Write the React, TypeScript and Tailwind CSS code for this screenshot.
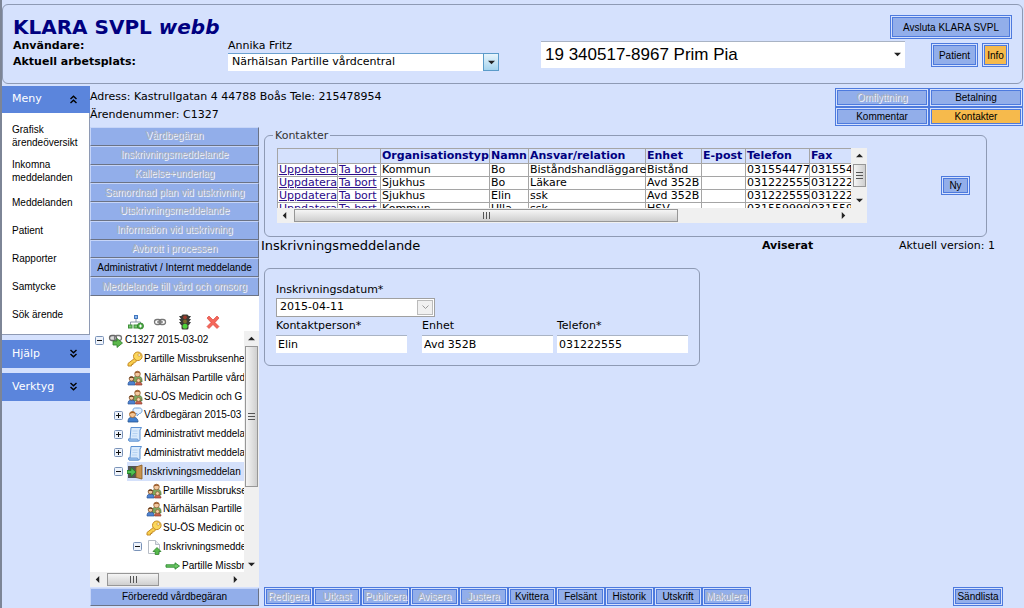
import { useState } from 'react';
import { clsx } from 'clsx';

type IconName = 'case' | 'key' | 'people' | 'request' | 'note' | 'door' | 'page' | 'arrow';

interface TreeItem {
  level: 0 | 1 | 2 | 3;
  icon: IconName;
  label: string;
  toggle?: 'open' | 'closed';
  selected?: boolean;
}

const navItems = [
  'Grafisk ärendeöversikt',
  'Inkomna meddelanden',
  'Meddelanden',
  'Patient',
  'Rapporter',
  'Samtycke',
  'Sök ärende',
];

const caseActions = [
  { label: 'Vårdbegäran', enabled: false },
  { label: 'Inskrivningsmeddelande', enabled: false },
  { label: 'Kallelse+underlag', enabled: false },
  { label: 'Samordnad plan vid utskrivning', enabled: false },
  { label: 'Utskrivningsmeddelande', enabled: false },
  { label: 'Information vid utskrivning', enabled: false },
  { label: 'Avbrott i processen', enabled: false },
  { label: 'Administrativt / Internt meddelande', enabled: true },
  { label: 'Meddelande till vård och omsorg', enabled: false },
];

const treeItems: TreeItem[] = [
  { level: 0, icon: 'case', label: 'C1327 2015-03-02', toggle: 'open' },
  { level: 1, icon: 'key', label: 'Partille Missbruksenhe' },
  { level: 1, icon: 'people', label: 'Närhälsan Partille vård' },
  { level: 1, icon: 'people', label: 'SU-ÖS Medicin och G' },
  { level: 1, icon: 'request', label: 'Vårdbegäran 2015-03', toggle: 'closed' },
  { level: 1, icon: 'note', label: 'Administrativt meddela', toggle: 'closed' },
  { level: 1, icon: 'note', label: 'Administrativt meddela', toggle: 'closed' },
  { level: 1, icon: 'door', label: 'Inskrivningsmeddelan', toggle: 'open', selected: true },
  { level: 2, icon: 'people', label: 'Partille Missbrukse' },
  { level: 2, icon: 'people', label: 'Närhälsan Partille' },
  { level: 2, icon: 'key', label: 'SU-ÖS Medicin oc' },
  { level: 2, icon: 'page', label: 'Inskrivningsmedde', toggle: 'open' },
  { level: 3, icon: 'arrow', label: 'Partille Missbr' },
];

const indent = ['pl-[5px]', 'pl-[24px]', 'pl-[43px]', 'pl-[62px]'];

const columns = [
  { label: '', width: 'w-[60px]' },
  { label: '', width: 'w-[43px]' },
  { label: 'Organisationstyp', width: 'w-[109px]' },
  { label: 'Namn', width: 'w-[39px]' },
  { label: 'Ansvar/relation', width: 'w-[117px]' },
  { label: 'Enhet', width: 'w-[56px]' },
  { label: 'E-post', width: 'w-[44px]' },
  { label: 'Telefon', width: 'w-[64px]' },
  { label: 'Fax', width: 'w-[70px]' },
];

const contacts = [
  ['Kommun', 'Bo', 'Biståndshandläggare', 'Bistånd', '', '031554477', '031554'],
  ['Sjukhus', 'Bo', 'Läkare', 'Avd 352B', '', '031222555', '031222'],
  ['Sjukhus', 'Elin', 'ssk', 'Avd 352B', '', '031222555', '031222'],
  ['Kommun', 'Ulla', 'ssk', 'HSV', '', '031559999', '031559'],
];

const footerActions = [
  { label: 'Redigera', enabled: false },
  { label: 'Utkast', enabled: false },
  { label: 'Publicera', enabled: false },
  { label: 'Avisera', enabled: false },
  { label: 'Justera', enabled: false },
  { label: 'Kvittera', enabled: true },
  { label: 'Felsänt', enabled: true },
  { label: 'Historik', enabled: true },
  { label: 'Utskrift', enabled: true },
  { label: 'Makulera', enabled: false },
];

const arial = "font-['Liberation_Sans',Arial,sans-serif]";
const embossed = 'text-[#aab1bf] [text-shadow:1px_1px_0_#f4f6fb]';

interface ButtonProps {
  label: string;
  disabled?: boolean;
  active?: boolean;
  className?: string;
}

function FrameButton({ label, disabled, active, className }: ButtonProps) {
  return (
    <button
      type="button"
      disabled={disabled}
      className={clsx(
        'flex items-center justify-center border-3 border-double border-[#4d7ade] bg-clip-padding whitespace-nowrap',
        arial,
        active ? 'bg-[#f6ba4c]' : 'bg-[#92aeea]',
        disabled ? embossed : 'text-black',
        className,
      )}
    >
      {label}
    </button>
  );
}

function BarButton({ label, disabled, className }: ButtonProps) {
  return (
    <button
      type="button"
      disabled={disabled}
      className={clsx(
        'flex w-full items-center justify-center border border-t-[#c6d5f8] border-r-[#6b7385] border-b-[#6b7385] border-l-[#c6d5f8] bg-[#92aeea] text-[10px] leading-none whitespace-nowrap',
        arial,
        disabled ? embossed : 'text-black',
        className,
      )}
    >
      {label}
    </button>
  );
}

function Chevrons({ up }: { up?: boolean }) {
  return (
    <svg width="9" height="10" viewBox="0 0 9 10" fill="none" stroke="#000" strokeWidth="1.4">
      {up ? (
        <path d="M1.500 4 4.500 1.200 7.500 4M1.500 8 4.500 5.200 7.500 8" />
      ) : (
        <path d="M1.500 1 4.500 3.800 7.500 1M1.500 5 4.500 7.800 7.500 5" />
      )}
    </svg>
  );
}

function Triangle({ dir, className }: { dir: 'up' | 'down' | 'left' | 'right'; className?: string }) {
  const points = {
    up: '0,6 4,2 8,6',
    down: '0,2 8,2 4,6',
    left: '6,0 2,4 6,8',
    right: '2,0 6,4 2,8',
  };
  return (
    <svg width="7" height="7" viewBox="0 0 8 8" className={className}>
      <polygon points={points[dir]} fill="#222" />
    </svg>
  );
}

// Three small ridges on a scroll thumb
function Grip({ vertical }: { vertical?: boolean }) {
  return (
    <svg width="7" height="7" viewBox="0 0 7 7" stroke="#555">
      {vertical ? <path d="M0 .5h7M0 3.5h7M0 6.5h7" /> : <path d="M.5 0v7M3.5 0v7M6.5 0v7" />}
    </svg>
  );
}

function TreeIcon({ name }: { name: IconName }) {
  return (
    <svg width="16" height="16" viewBox="0 0 16 16" fill="none" className="shrink-0">
      {name === 'case' && (
        <>
          <rect x="1.500" y="3.500" width="7" height="5" rx="2.5" fill="#ddd" stroke="#666" strokeWidth="1.3" />
          <rect x="6.500" y="3.500" width="7" height="5" rx="2.5" stroke="#777" strokeWidth="1.3" />
          <path d="M5 9h4V6.500l5.500 4.500-5.500 4.500V13H5z" fill="#5cb84c" stroke="#2f7d2b" strokeWidth=".8" />
        </>
      )}
      {name === 'key' && (
        <>
          <path d="M8 7 1 12.500V15h3.500v-1.500H6V12h1.500l2.500-2.500z" fill="#f9cf4e" stroke="#c48a25" />
          <circle cx="10.800" cy="5.300" r="4.300" fill="#fbd75c" stroke="#c48a25" />
          <circle cx="12.200" cy="4" r="1.300" fill="#fff" stroke="#c48a25" strokeWidth=".7" />
        </>
      )}
      {name === 'people' && (
        <>
          <path d="M6 10c0-3 2-4 4.500-4S15 7.500 15 10v2H6z" fill="#7fa85f" stroke="#4b6d38" strokeWidth=".7" />
          <circle cx="10.500" cy="4" r="2.800" fill="#f3c9a0" stroke="#9a6a3a" strokeWidth=".8" />
          <path d="M7.700 3.500C8 .5 13 .5 13.300 3.500 12 2.500 9.500 2.500 7.700 3.500z" fill="#9a5a2c" />
          <path d="M1 15c0-3 1-4 3.500-4S8 12 8 15z" fill="#4d82cf" stroke="#2a5599" strokeWidth=".7" />
          <circle cx="4.500" cy="8.800" r="2.300" fill="#f3c9a0" stroke="#7c4a22" strokeWidth=".8" />
          <path d="M2.200 8.500C2.400 5.800 6.600 5.800 6.800 8.500 5.500 7.500 3.500 7.500 2.200 8.500z" fill="#5d3516" />
          <path d="M8.500 15c0-2 1-3 3-3s3.500 1 3.500 3z" fill="#c8604c" stroke="#8c3a2b" strokeWidth=".7" />
          <circle cx="11.500" cy="10.500" r="1.900" fill="#f5d0a9" stroke="#8b5426" strokeWidth=".7" />
        </>
      )}
      {name === 'request' && (
        <>
          <path d="M8.500 1h4c1.500 0 2.500 1 2.500 2.500S14 6.500 12.500 6.500L10 9V6.500H8.500C7 6.500 6 5.500 6 3.500S7 1 8.500 1z" fill="#e4f1ff" stroke="#6b9fd8" />
          <path d="M1 15c0-4 2-5 4.500-5S11 11 11 15z" fill="#3f7fd0" stroke="#23538f" strokeWidth=".8" />
          <circle cx="5.500" cy="7.500" r="3" fill="#f5c795" stroke="#a3642c" strokeWidth=".8" />
          <path d="M2.500 7C3 3.500 8 3.500 8.500 7 7 5.700 4.500 5.700 2.500 7z" fill="#a65e20" />
        </>
      )}
      {name === 'note' && (
        <>
          <path d="M4 1.500h10.500L13 4v9.500c0 1-.5 1.500-1.500 1.500H2l-.5-2H3z" fill="#d9eafc" stroke="#5a8fd0" />
          <path d="M5.500 5h5M5.500 7.500h5M5 10h5" stroke="#b5d2f2" />
          <path d="M1.500 13h9l1 2H2z" fill="#a8ccf3" stroke="#5a8fd0" strokeWidth=".8" />
        </>
      )}
      {name === 'door' && (
        <>
          <rect x="1" y="2" width="10" height="12" fill="#555" />
          <path d="m9 3 6-2v14l-6-1.500z" fill="#c9934d" stroke="#8a5b22" strokeWidth=".8" />
          <path d="M0 6.500h4V3.500L9 8l-5 4.500v-3H0z" fill="#4fc054" stroke="#1c7a22" strokeWidth=".8" />
        </>
      )}
      {name === 'page' && (
        <>
          <path d="M2.500 1.500h7l4 4v9h-11z" fill="#fff" stroke="#b7bdc6" />
          <path d="M9.500 1.500v4h4" fill="#e6e9ee" stroke="#b7bdc6" />
          <path d="m11 8.500 4 4h-2.200v3H9.200v-3H7z" fill="#56b94b" stroke="#2d8128" strokeWidth=".8" />
        </>
      )}
      {name === 'arrow' && (
        <path d="M1 6.800h9V4.800L14.500 8 10 11.200v-2H1z" fill="#6cc665" stroke="#2b8a2f" strokeWidth=".9" />
      )}
    </svg>
  );
}

function TreeToolbar() {
  return (
    <div className="flex h-[35px] items-end gap-2 pb-px pl-[38px]">
      <button type="button" aria-label="Nytt ärende">
        <svg width="16" height="16" viewBox="0 0 16 16" fill="none">
          <path d="M8 5v3M2.500 11V8h10v2" stroke="#8a96a5" />
          <rect x="6.500" y="1.500" width="3" height="3" fill="#8fb9ef" stroke="#4377bd" />
          <rect x=".5" y="11" width="3.500" height="3" fill="#77c96f" stroke="#3f8f3b" />
          <rect x="6" y="11" width="3.500" height="3" fill="#77c96f" stroke="#3f8f3b" />
          <circle cx="12.500" cy="12" r="3" fill="#4fae48" stroke="#2c7a28" strokeWidth=".8" />
          <path d="M11 12h3M12.500 10.500v3" stroke="#fff" />
        </svg>
      </button>
      <button type="button" aria-label="Länka">
        <svg width="16" height="16" viewBox="0 0 16 16" fill="none" stroke="#777" strokeWidth="1.300">
          <rect x="2.500" y="5.500" width="6.500" height="5" rx="2.500" />
          <rect x="7" y="5.500" width="6.500" height="5" rx="2.500" />
          <path d="M5 8h6" />
        </svg>
      </button>
      <button type="button" aria-label="Status" className="ml-px">
        <svg width="16" height="16" viewBox="0 0 16 16">
          <path d="M2 2h12l-2 3h2l-2 3h2l-2 3H4L2 8h2L2 5h2z" fill="#3a3a3a" />
          <rect x="4.500" y=".5" width="7" height="15" rx="1.500" fill="#3c3c34" />
          <circle cx="8" cy="3.300" r="1.900" fill="#9c3a2c" />
          <circle cx="8" cy="7.500" r="1.900" fill="#7a6a2a" />
          <circle cx="8" cy="12.300" r="2.500" fill="#4fd23b" />
        </svg>
      </button>
      <button type="button" aria-label="Ta bort" className="ml-1">
        <svg width="16" height="16" viewBox="0 0 16 16">
          <path
            d="m2 4 2-2 4 4 4-4 2 2-4 4.500 4 4-2 2-4-4-4 4-2-2 4-4z"
            fill="#f4675b"
            stroke="#d63a30"
            strokeWidth=".6"
          />
        </svg>
      </button>
    </div>
  );
}

function CaseTree() {
  return (
    <div className="flex flex-1 flex-col bg-white">
      <TreeToolbar />
      <div className="flex flex-1">
        <div className="flex w-0 flex-1 flex-col overflow-hidden">
          {/* the last row runs in under the scroll bar */}
          <ul className="-mb-[3px] flex flex-1 flex-col">
            {treeItems.map((item, i) => (
              <li
                key={i}
                className={clsx(
                  'flex min-h-[18px] flex-1 items-center text-[10px] leading-none whitespace-nowrap',
                  arial,
                  indent[item.level],
                )}
              >
                {item.toggle ? (
                  <button type="button" aria-label={item.toggle === 'open' ? 'Fäll ihop' : 'Fäll ut'}>
                    <svg width="9" height="9" viewBox="0 0 9 9" fill="#eef3fb" stroke="#7a93b8">
                      <rect x=".5" y=".5" width="8" height="8" rx="1" />
                      <path d={item.toggle === 'open' ? 'M2 4.5h5' : 'M2 4.5h5M4.500 2v5'} stroke="#111" />
                    </svg>
                  </button>
                ) : (
                  <span className="w-[9px] shrink-0" />
                )}
                <span
                  className={clsx('ml-1 flex h-full items-center gap-px', item.selected && 'flex-1 bg-[#d5e1fb]')}
                >
                  <TreeIcon name={item.icon} />
                  {item.label}
                </span>
              </li>
            ))}
          </ul>
        </div>
        <div className="flex w-[15px] flex-col items-center bg-[#f0f0f0]">
          <Triangle dir="up" className="my-1" />
          <div className="flex h-[141px] w-[13px] items-center justify-center border border-[#979797] bg-linear-to-r from-[#f5f5f5] to-[#cfcfcf]">
            <Grip vertical />
          </div>
          <Triangle dir="down" className="mt-auto mb-1" />
        </div>
      </div>
      <div className="flex h-[15px] items-center bg-[#f0f0f0] pr-5 pl-1">
        <Triangle dir="left" />
        <div className="ml-1.5 flex h-[13px] w-[52px] items-center justify-center border border-[#979797] bg-linear-to-b from-[#f5f5f5] to-[#cfcfcf]">
          <Grip />
        </div>
        <Triangle dir="right" className="ml-auto" />
      </div>
    </div>
  );
}

function ContactTable() {
  return (
    <div className="flex w-[590px] shrink-0 flex-col bg-[#f0f0f0]">
      <div className="flex h-[60px]">
        <div className="w-0 flex-1 overflow-hidden bg-white">
          <table className="w-[602px] table-fixed border-collapse text-[11px] leading-[12px]">
            <thead>
              <tr className="h-[15px] bg-[#d5e1fd] text-left text-[#000080]">
                {columns.map((col, i) => (
                  <th key={i} className={clsx('border border-[#a5a5a5] px-px py-0 whitespace-nowrap', col.width)}>
                    {col.label}
                  </th>
                ))}
              </tr>
            </thead>
            <tbody>
              {contacts.map((row, i) => (
                <tr key={i} className="h-[13px]">
                  <td className="border border-[#a5a5a5] px-px py-0">
                    <a href="#uppdatera" className="text-[#2a0a8a] underline">Uppdatera</a>
                  </td>
                  <td className="border border-[#a5a5a5] px-px py-0 whitespace-nowrap">
                    <a href="#tabort" className="text-[#2a0a8a] underline">Ta bort</a>
                  </td>
                  {row.map((cell, j) => (
                    <td key={j} className="border border-[#a5a5a5] px-px py-0 whitespace-nowrap">{cell}</td>
                  ))}
                </tr>
              ))}
            </tbody>
          </table>
        </div>
        <div className="flex w-[16px] flex-col items-center">
          <Triangle dir="up" className="mt-1 mb-[5px]" />
          <div className="flex h-[23px] w-[13px] items-center justify-center border border-[#979797] bg-linear-to-r from-[#f5f5f5] to-[#cfcfcf]">
            <Grip vertical />
          </div>
          <Triangle dir="down" className="mt-auto mb-1" />
        </div>
      </div>
      <div className="flex h-[15px] items-center pr-5 pl-1">
        <Triangle dir="left" />
        <div className="ml-1.5 flex h-[13px] w-[384px] items-center justify-center border border-[#979797] bg-linear-to-b from-[#f5f5f5] to-[#cfcfcf]">
          <Grip />
        </div>
        <Triangle dir="right" className="ml-auto" />
      </div>
    </div>
  );
}

interface FieldProps { id: string; label: string; value: string; onChange: (v: string) => void; }

function Field({ id, label, value, onChange }: FieldProps) {
  return (
    <div className="flex flex-col">
      <label htmlFor={id} className="leading-[18px]">{label}</label>
      <input
        id={id}
        value={value}
        onChange={(e) => onChange(e.target.value)}
        className="h-[18px] w-[131px] border-t border-[#a9b3c4] bg-white px-0.5"
      />
    </div>
  );
}

function Header() {
  return (
    <header className="mt-1 flex h-20 items-start rounded-md border border-[#8e9ab4] pr-[10px] pl-[10px]">
      <div className="w-[528px] shrink-0 pt-2.5">
        <h1 className="text-[20px] leading-6 font-bold text-[#000080]">
          KLARA SVPL <em>webb</em>
        </h1>
        <div className="grid grid-cols-[215px_271px] items-center">
          <span className="leading-[14px] font-bold">Användare:</span>
          <span className="leading-[14px]">Annika Fritz</span>
          <label htmlFor="workplace" className="font-bold">Aktuell arbetsplats:</label>
          <div className="relative">
            <select
              id="workplace"
              className="block h-[18px] w-full appearance-none border-t border-[#6ba0d0] bg-white px-1"
            >
              <option>Närhälsan Partille vårdcentral</option>
            </select>
            <span className="pointer-events-none absolute inset-y-0 right-0 flex w-4 items-center justify-center border border-[#5b9bc9] bg-linear-to-b from-[#e8f5fc] to-[#a5d4ee]">
              <Triangle dir="down" />
            </span>
          </div>
        </div>
      </div>
      <div className="relative mt-9 flex-1">
        <select
          aria-label="Patient"
          className={clsx(
            'block h-[27px] w-full appearance-none border-t border-[#a9b3c4] bg-white px-1 text-[17px]',
            arial,
          )}
        >
          <option>19 340517-8967 Prim Pia</option>
        </select>
        <Triangle dir="down" className="pointer-events-none absolute top-2.5 right-1" />
      </div>
      <div className="ml-[-15px] flex w-[122px] shrink-0 flex-col pt-2.5 text-[10px]">
        <FrameButton label="Avsluta KLARA SVPL" className="h-6" />
        <div className="mt-1 mr-[3px] flex justify-end gap-1">
          <FrameButton label="Patient" className="h-6 w-[47px]" />
          <FrameButton label="Info" active className="h-6 w-[27px]" />
        </div>
      </div>
    </header>
  );
}

function SideNav() {
  return (
    <nav className="flex w-[88px] shrink-0 flex-col gap-[5px]">
      <div>
        <button type="button" className="flex h-[27px] w-full items-center justify-between bg-[#5b85dc] pr-3 pl-2.5 text-white">
          Meny <Chevrons up />
        </button>
        <ul className={clsx('border-r border-b border-[#8e9ab4] bg-white pt-[5px] pb-1.5 text-[10px] leading-[13px]', arial)}>
          {navItems.map((item) => (
            <li
              key={item}
              className={clsx('flex items-center pl-2.5', item.includes(' ') && item !== 'Sök ärende' ? 'h-[35px]' : 'h-7')}
            >
              <a href="#meny" className={clsx('block', item !== 'Sök ärende' && 'w-[60px]')}>{item}</a>
            </li>
          ))}
        </ul>
      </div>
      {['Hjälp', 'Verktyg'].map((label) => (
        <button
          key={label}
          type="button"
          className="flex h-[28px] w-full items-center justify-between bg-[#5b85dc] pr-3 pl-2.5 text-white"
        >
          {label} <Chevrons />
        </button>
      ))}
    </nav>
  );
}

export default function App() {
  const [form, setForm] = useState({ person: 'Elin', unit: 'Avd 352B', phone: '031222555' });

  return (
    <div className="flex min-h-screen flex-col border-l-2 border-[#7d8596] bg-[#d5e1fd] pr-px font-['DejaVu_Sans',Verdana,sans-serif] text-[11px] text-black">
      <Header />
      <div className="mt-0.5 flex flex-1">
        <SideNav />
        <main className="flex min-w-0 flex-1 flex-col">
          <div className="flex h-[41px] items-start justify-between pt-0.5">
            <div className="leading-[18px]">
              <p>Adress: Kastrullgatan 4 44788 Boås Tele: 215478954</p>
              <p>Ärendenummer: C1327</p>
            </div>
            <div className="grid grid-cols-[94px_94px] text-[10px]">
              <FrameButton label="Omflyttning" disabled className="h-[19px]" />
              <FrameButton label="Betalning" className="h-[19px]" />
              <FrameButton label="Kommentar" className="h-[19px]" />
              <FrameButton label="Kontakter" active className="h-[19px]" />
            </div>
          </div>

          <div className="flex flex-1">
            <div className="flex w-[169px] shrink-0 flex-col pb-0.5">
              <div className="grid h-[169px] grid-rows-9">
                {caseActions.map((a) => (
                  <BarButton key={a.label} label={a.label} disabled={!a.enabled} />
                ))}
              </div>
              <CaseTree />
              <BarButton label="Förberedd vårdbegäran" className="mt-px h-[18px]" />
            </div>

            <div className="flex min-w-0 flex-1 flex-col pl-[5px]">
              <fieldset className="mr-9 rounded-md border border-[#8e9ab4] pt-1 pr-4 pb-[13px] pl-3">
                <legend className="-ml-1 px-0.5 leading-[17px] text-[#333]">Kontakter</legend>
                <div className="flex items-center justify-between">
                  <ContactTable />
                  <FrameButton label="Ny" className="h-[19px] w-[29px] text-[10px]" />
                </div>
              </fieldset>

              <div className="grid grid-cols-[498px_1fr_auto] items-center pr-7 leading-[17px]">
                <h2 className="-ml-[3px] text-[13px]">Inskrivningsmeddelande</h2>
                <strong>Aviserat</strong>
                <span>Aktuell version: 1</span>
              </div>

              <form className="mt-3.5 w-[436px] rounded-md border border-[#8e9ab4] px-[11px] pt-3 pb-3">
                <label htmlFor="admitted" className="block leading-[17px]">Inskrivningsdatum*</label>
                <div className="relative w-[159px]">
                  <select
                    id="admitted"
                    className="block h-[19px] w-full appearance-none border border-[#a0a0a0] bg-white px-[3px]"
                  >
                    <option>2015-04-11</option>
                  </select>
                  <span className="pointer-events-none absolute inset-y-0.5 right-0.5 flex w-4 items-center justify-center border border-[#bbb] bg-[#f0f0f0]">
                    <svg width="7" height="5" viewBox="0 0 7 5" fill="none" stroke="#999">
                      <path d="m.5.500 3 3 3-3" />
                    </svg>
                  </span>
                </div>
                <div className="grid grid-cols-[146px_135px_131px]">
                  <Field id="person" label="Kontaktperson*" value={form.person} onChange={(v) => setForm({ ...form, person: v })} />
                  <Field id="unit" label="Enhet" value={form.unit} onChange={(v) => setForm({ ...form, unit: v })} />
                  <Field id="phone" label="Telefon*" value={form.phone} onChange={(v) => setForm({ ...form, phone: v })} />
                </div>
              </form>

              <footer className="mt-auto flex justify-between pr-5 pb-0.5 text-[10px]">
                <div className="grid w-[487px] grid-cols-10">
                  {footerActions.map((a) => (
                    <FrameButton key={a.label} label={a.label} disabled={!a.enabled} className="h-[19px]" />
                  ))}
                </div>
                <FrameButton label="Sändlista" className="h-[19px] w-[50px]" />
              </footer>
            </div>
          </div>
        </main>
      </div>
    </div>
  );
}
